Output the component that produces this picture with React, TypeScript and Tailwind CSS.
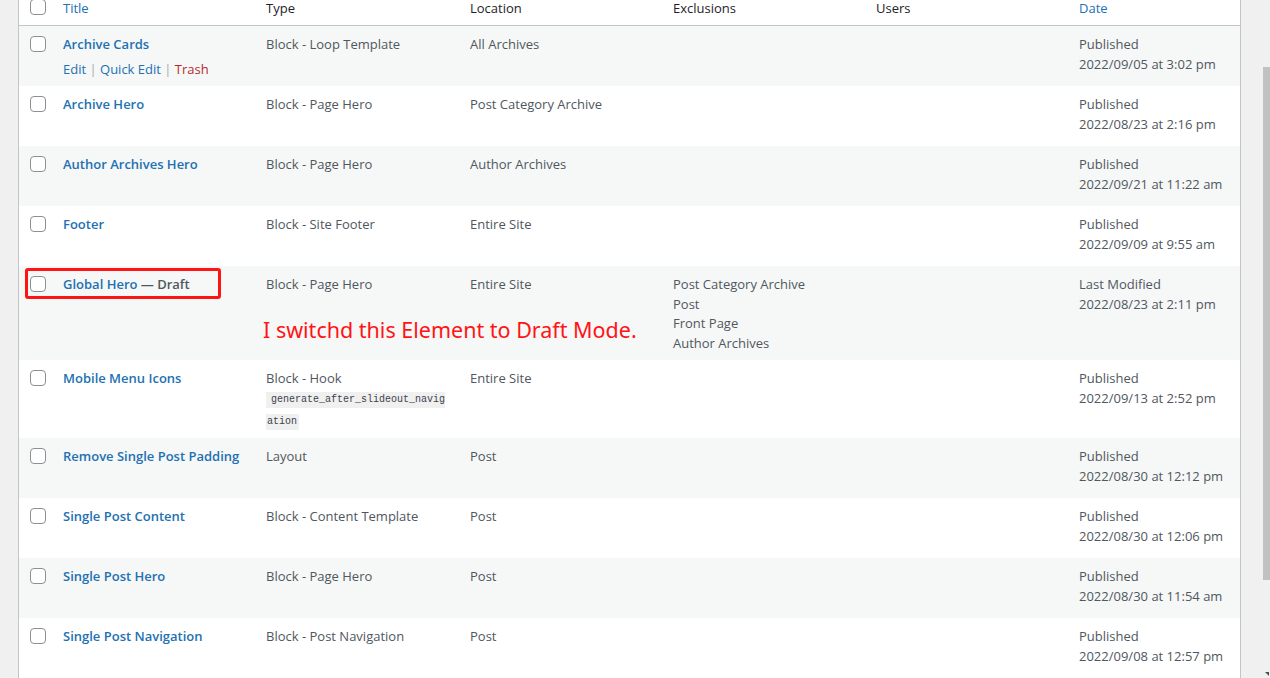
import React from 'react';

type Row = {
  title: string;
  draft?: boolean;
  actions?: boolean;
  type: string;
  hook?: boolean;
  location: string;
  exclusions?: string[];
  status: string;
  date: string;
  h: string;
  alt: boolean;
};

const rows: Row[] = [
  { title: 'Archive Cards', actions: true, type: 'Block - Loop Template', location: 'All Archives', status: 'Published', date: '2022/09/05 at 3:02 pm', h: 'h-[60px]', alt: true },
  { title: 'Archive Hero', type: 'Block - Page Hero', location: 'Post Category Archive', status: 'Published', date: '2022/08/23 at 2:16 pm', h: 'h-[60px]', alt: false },
  { title: 'Author Archives Hero', type: 'Block - Page Hero', location: 'Author Archives', status: 'Published', date: '2022/09/21 at 11:22 am', h: 'h-[60px]', alt: true },
  { title: 'Footer', type: 'Block - Site Footer', location: 'Entire Site', status: 'Published', date: '2022/09/09 at 9:55 am', h: 'h-[60px]', alt: false },
  {
    title: 'Global Hero',
    draft: true,
    type: 'Block - Page Hero',
    location: 'Entire Site',
    exclusions: ['Post Category Archive', 'Post', 'Front Page', 'Author Archives'],
    status: 'Last Modified',
    date: '2022/08/23 at 2:11 pm',
    h: 'h-[94px]',
    alt: true,
  },
  { title: 'Mobile Menu Icons', type: 'Block - Hook', hook: true, location: 'Entire Site', status: 'Published', date: '2022/09/13 at 2:52 pm', h: 'h-[78px]', alt: false },
  { title: 'Remove Single Post Padding', type: 'Layout', location: 'Post', status: 'Published', date: '2022/08/30 at 12:12 pm', h: 'h-[60px]', alt: true },
  { title: 'Single Post Content', type: 'Block - Content Template', location: 'Post', status: 'Published', date: '2022/08/30 at 12:06 pm', h: 'h-[60px]', alt: false },
  { title: 'Single Post Hero', type: 'Block - Page Hero', location: 'Post', status: 'Published', date: '2022/08/30 at 11:54 am', h: 'h-[60px]', alt: true },
  { title: 'Single Post Navigation', type: 'Block - Post Navigation', location: 'Post', status: 'Published', date: '2022/09/08 at 12:57 pm', h: 'h-[60px]', alt: false },
];

const cols = 'grid grid-cols-[34px_203px_204px_203px_203px_203px_1fr]';

function Checkbox() {
  return <span className="block h-4 w-4 rounded-[4px] border border-[#8c8f94] bg-white" />;
}

export default function App() {
  return (
    <div className="flex h-[678px] w-[1270px] overflow-hidden bg-[#f0f0f1] text-[13px] leading-[19.5px] text-[#50575e] [font-family:'Open_Sans','Noto_Sans',sans-serif]">
      <div className="w-[18px] shrink-0" />
      <div className="relative w-[1223px] shrink-0 border-x border-[#c3c4c7] bg-white">
        {/* header */}
        <div className={`${cols} h-[26px] border-b border-[#c3c4c7] leading-[16px] text-[#1d2327]`}>
          <div className="-mt-px pl-[11px]">
            <Checkbox />
          </div>
          <div className="pl-[10px] text-[#2271b1]">Title</div>
          <div className="pl-[10px]">Type</div>
          <div className="pl-[10px]">Location</div>
          <div className="pl-[10px]">Exclusions</div>
          <div className="pl-[10px]">Users</div>
          <div className="pl-[10px] text-[#2271b1]">Date</div>
        </div>

        {rows.map((r) => (
          <div key={r.title} className={`${cols} ${r.h} ${r.alt ? 'bg-[#f6f7f7]' : 'bg-white'}`}>
            <div className="pl-[11px] pt-[10px]">
              <Checkbox />
            </div>
            <div className="pl-[10px] pt-[9px]">
              <div className="font-semibold">
                <span className="text-[#2271b1]">{r.title}</span>
                {r.draft && <span className="text-[#50575e]"> — Draft</span>}
              </div>
              {r.actions && (
                <div className="pt-[5px] text-[#2271b1]">
                  Edit <span className="text-[#a7aaad]">|</span> Quick Edit{' '}
                  <span className="text-[#a7aaad]">|</span> <span className="text-[#b32d2e]">Trash</span>
                </div>
              )}
            </div>
            <div className="pl-[10px] pt-[9px]">
              <div>{r.type}</div>
              {r.hook && (
                <div className="[font-family:'Liberation_Mono',monospace] text-[10px] leading-[16px] text-[#3c434a]">
                  <div className="mt-[3px] inline-block bg-[#f0f0f1] pl-[5px] pr-0">generate_after_slideout_navig</div>
                  <div className="mt-[6px] block w-fit bg-[#f0f0f1] pl-px pr-[2px]">ation</div>
                </div>
              )}
            </div>
            <div className="pl-[10px] pt-[9px]">{r.location}</div>
            <div className="pl-[10px] pt-[9px]">
              {r.exclusions?.map((e) => (
                <div key={e}>{e}</div>
              ))}
            </div>
            <div className="pl-[10px] pt-[9px]" />
            <div className="pl-[10px] pt-[9px]">
              <div>{r.status}</div>
              <div>{r.date}</div>
            </div>
          </div>
        ))}

        {/* annotation */}
        <div className="absolute left-[6px] top-[268px] h-[31px] w-[196px] rounded-[3px] border-[3px] border-[#ff1414]" />
        <div className="absolute left-[244px] top-[315px] whitespace-nowrap text-[21.5px] leading-[30px] text-[#ff1414] [font-family:'Noto_Sans','Noto_Sans_CJK_SC',sans-serif]">
          I switchd this Element to Draft Mode.
        </div>
      </div>
      <div className="relative flex-1">
        <div className="absolute right-0 top-[67px] h-[513px] w-[7px] bg-[#c1c1c1]" />
        <div className="absolute bottom-[2px] right-[1px] h-0 w-0 border-l-[4px] border-t-[4px] border-l-transparent border-t-[#505050]" />
      </div>
    </div>
  );
}
